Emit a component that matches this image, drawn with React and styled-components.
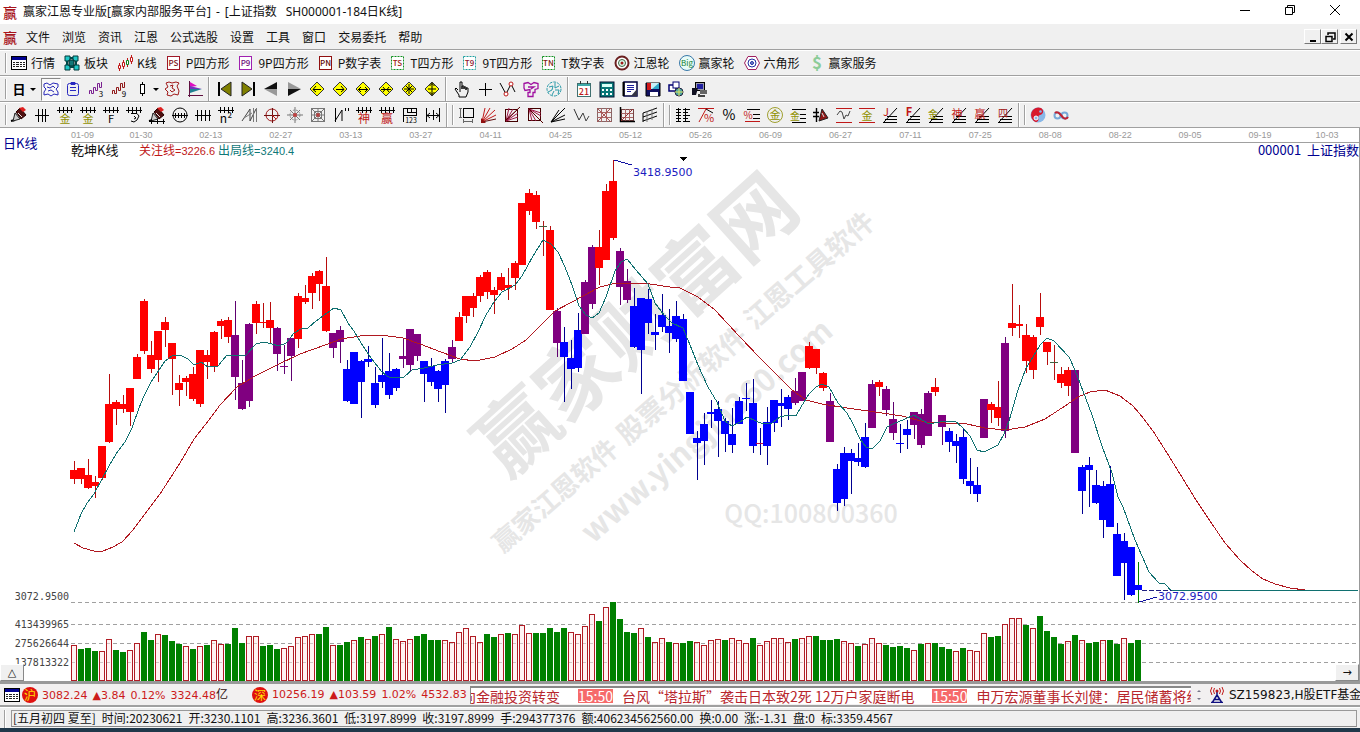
import React from "react";
import styled, { createGlobalStyle, css } from "styled-components";

const UI = '"Noto Sans CJK SC", "Noto Sans", sans-serif';
const WIDE = '"DejaVu Sans", "Noto Sans CJK SC", sans-serif';

const GlobalStyle = createGlobalStyle`
  * { box-sizing: border-box; }
  body { margin: 0; background: #fff; font: 12px/16px ${UI}; color: #111; }
  button { font: inherit; color: inherit; margin: 0; padding: 0; border: 0; background: none; }
`;

const Page = styled.div`
  display: flex;
  flex-direction: column;
  width: 100%;
  overflow: hidden;
`;

/* ---------- title bar and menu ---------- */
const TitleBar = styled.header`
  display: flex;
  align-items: center;
  height: 24px;
  padding-left: 3px;
  background: #fff;
`;
const Logo = styled.span`
  width: 15px;
  margin-right: 5px;
  font-size: 14px;
  font-weight: 500;
  color: #a8141c;
`;
const Title = styled.h1`
  display: flex;
  flex: 1;
  gap: 5px;
  margin: 0;
  font: 400 12px/16px "Noto Sans", "Noto Sans CJK SC", sans-serif;
  white-space: nowrap;
`;
const Symbols = styled.span`
  display: flex;
  gap: 9px;
`;
const WindowButton = styled.button`
  display: flex;
  align-items: center;
  justify-content: center;
  width: 45px;
  height: 22px;
`;
const WindowButtons = styled.div`
  display: flex;
  padding: 0 3px 4px 0;
`;
const MenuBar = styled.nav`
  display: flex;
  align-items: center;
  height: 26px;
  padding: 0 3px;
  background: #f0f0f0;
  border-bottom: 1px solid #a0a0a0;
`;
const MenuItem = styled.button`
  margin: 0 6px;
  white-space: nowrap;
`;
const MenuItems = styled.div`
  display: flex;
  flex: 1;
  margin-left: -3px;
`;
const MdiButton = styled.button`
  display: flex;
  align-items: center;
  justify-content: center;
  width: 17px;
  height: 15px;
  margin-left: ${(p) => (p.$apart ? 2 : 0)}px;
  background: #f0f0f0;
  border: 1px solid;
  border-color: #fff #777 #777 #fff;
`;

/* ---------- toolbars ---------- */
const Toolbar = styled.div`
  display: flex;
  align-items: center;
  height: 26px;
  padding-left: 5px;
  background: #f0f0f0;
  border-top: 1px solid #fff;
  border-bottom: 1px solid #a0a0a0;
`;
const Grip = styled.span`
  flex: none;
  width: 2px;
  height: 20px;
  margin-left: ${(p) => (p.$inner ? 1 : 0)}px;
  border-left: 1px solid #a0a0a0;
  border-right: 1px solid #fff;
`;
const Divider = styled.span`
  align-self: stretch;
  width: 2px;
  margin: 0 3px 0 2px;
  border-left: 1px solid #a0a0a0;
  border-right: 1px solid #fff;
`;
const LabelButton = styled.button`
  display: flex;
  align-items: center;
  gap: 4px;
  margin-right: 9px;
  white-space: nowrap;
`;
const LabelButtons = styled.div`
  display: flex;
  padding-left: 4px;
`;
const ToolButton = styled.button`
  display: flex;
  align-items: center;
  justify-content: center;
  flex: none;
  width: ${(p) => (p.$pressed ? 20 : 23)}px;
  height: 23px;
  ${(p) =>
    p.$pressed &&
    css`
      border: 1px solid;
      border-color: #888 #fff #fff #888;
      background: #f8f8f8;
      margin-left: 4px;
    `}
`;
const DropArrow = styled.span`
  width: 5px;
  margin-right: 1px;
  border: solid transparent;
  border-width: 3px 3px 0;
  border-top-color: #000;
`;
const Glyph = styled.svg`
  display: block;
  flex: none;
  width: 16px;
  height: 16px;
  overflow: visible;
`;

/* ---------- chart ---------- */
const ChartArea = styled.main`
  position: relative;
  background: #fff;
`;
const ChartHead = styled.div`
  display: grid;
  grid-template-columns: 71px 1fr;
  grid-template-rows: 15px 14px;
  border-right: 1px solid #999;
`;
const Period = styled.div`
  grid-row: 1 / 3;
  align-self: center;
  padding-left: 3px;
  font-size: 13px;
  color: #000090;
`;
const Dates = styled.div`
  display: grid;
  grid-template-columns: 35fr repeat(17, 70fr) 64fr;
  border-bottom: 1px solid #a0a0a0;
  font: 9px/15px "Liberation Sans", sans-serif;
  color: #999;
  text-align: center;
  white-space: nowrap;
`;
const DateCell = styled.span`
  text-align: ${(p) => (p.$first ? "left" : "center")};
`;
const Legend = styled.div`
  display: flex;
  align-items: center;
  line-height: 14px;
  white-space: nowrap;
`;
const LegendName = styled.span`
  width: 68px;
  font-size: 13px;
`;
const LegendItem = styled.span`
  margin-right: 3px;
  color: ${(p) => p.$color};
`;
const LegendValue = styled.span`
  font: 11px/14px "Liberation Sans", sans-serif;
`;
const Symbol = styled.span`
  margin-left: auto;
  font-size: 13px;
  color: #000090;
`;
const Plot = styled.svg`
  display: block;
  width: 100%;
  height: auto;
`;
const CornerButton = styled.button`
  position: absolute;
  bottom: 0;
  ${(p) => (p.$right ? "right: 1px;" : "left: 0;")}
  width: 24px;
  height: 17px;
  font: 11px/13px "DejaVu Sans", sans-serif;
  background: #f0f0f0;
  border: 1px solid;
  border-color: #fff #888 #888 #fff;
`;

/* ---------- ticker and status ---------- */
const Ticker = styled.section`
  display: flex;
  align-items: center;
  height: 26px;
  background: #f2f0f0;
  border-top: 3px solid #999;
  border-bottom: 2px solid #a0a0a0;
  white-space: nowrap;
`;
const Indices = styled.div`
  display: flex;
  align-items: center;
  flex: 0 0 470px;
  padding-left: 4px;
  overflow: hidden;
`;
const Market = styled.span`
  flex: none;
  width: 16px;
  height: 16px;
  margin: 0 4px 0 ${(p) => p.$gap}px;
  border-radius: 50%;
  background: #e01010;
  color: #ffe000;
  text-align: center;
`;
const Quote = styled.span`
  display: flex;
  align-items: baseline;
  gap: 5px;
  font: 11px/16px ${WIDE};
  color: #cc1a1a;
`;
const Unit = styled.span`
  font: 12px/16px ${UI};
  color: #301010;
`;
const News = styled.div`
  flex: 1;
  height: 18px;
  min-width: 0;
  overflow: hidden;
  background: #fff;
  border-top: 2px solid #888;
  border-left: 1px solid #888;
`;
const NewsTrack = styled.div`
  display: flex;
  margin-left: -9px;
  font-size: 14px;
  line-height: 16px;
  color: #b8262c;
`;
const NewsTime = styled.time`
  height: 14px;
  margin: 1px 9px 0 18px;
  line-height: 14px;
  background: #f66a6a;
  color: #fff;
`;
const Spinner = styled.span`
  flex: none;
  width: 18px;
`;
const Feed = styled.div`
  display: flex;
  align-items: center;
  gap: 4px;
  flex: 0 0 151px;
  overflow: hidden;
  font: 12px/16px ${WIDE};
`;
const StatusBar = styled.footer`
  display: flex;
  height: 21px;
  padding: 2px 3px 1px 4px;
  gap: 5px;
  background: #f0f0f0;
  border-top: 1px solid #fff;
`;
const StatusText = styled.div`
  display: flex;
  gap: 6px;
  flex: 1;
  overflow: hidden;
  line-height: 14px;
  padding-left: 1px;
  white-space: nowrap;
  border: 1px solid;
  border-color: #999 #999 #888 #999;
`;
const Desktop = styled.div`
  height: 4px;
  background: #20384a;
`;

/* ---------- icon drawing helpers ---------- */
const L = ({ d, c = "#000", w = 1 }) => (
  <path d={d} fill="none" stroke={c} strokeWidth={w} />
);
const F = ({ d, c = "#000", s }) => <path d={d} fill={c} stroke={s} />;
const T = ({ x = 8, y = 15, s = 11, c = "#000", children, w = 400 }) => (
  <text x={x} y={y} fontSize={s} fill={c} textAnchor="middle" fontFamily={UI} fontWeight={w}>
    {children}
  </text>
);
const Icon = ({ children }) => (
  <Glyph viewBox="0 0 16 16" aria-hidden="true">
    {children}
  </Glyph>
);

const Diamond = ({ d }) => (
  <>
    <F d="M8 1L15 8L8 15L1 8Z" c="#ffff00" s="#333" />
    <L d={d} />
  </>
);
const Comb = () => <L d="M0 3.500H16M2.500 0V6M6.500 0V6M10.500 0V6M14.500 0V6" />;
const Fan = () => <L d="M1 15.500H15M3 12.500H15M5 9.500H15M2 15L15 1" />;
const Boxed = ({ c, t, ink }) => (
  <>
    <rect x="1.5" y="1.5" width="12" height="13" fill="#fff" stroke={c} strokeDasharray={t[0] === "T" ? "2 1" : "none"} />
    <T x={7.5} y={11} s={8} c={ink} w={500}>{t}</T>
  </>
);
const Pencil = () => (
  <>
    <L d="M0 14L4 13" w={2} />
    <F d="M2 14L4 6L9 12Z" c="#ccc" s="#222" />
    <F d="M5 5L9 1L15 8L10 12Z" c="#501010" s="#200" />
    <F d="M8 1L12 0L15 3L12 5Z" c="#e02020" />
    <L d="M7 6L11 10" c="#e8e8e8" />
  </>
);

const ART = {
  table: <><rect x="0.5" y="1.5" width="15" height="13" fill="#fff" stroke="#000" /><F d="M1 2H15V5H1Z" c="#000090" /><L d="M2 7.500H14M2 9.500H14M2 11.500H14" c="#222" w={1} /><L d="M4.500 5V14M8.500 5V14M11.500 5V14" c="#fff" /></>,
  blocks: <><F d="M1 1H6V6H1ZM9 1H14V6H9ZM1 10H6V15H1ZM10 10H15V15H10Z" c="#20c8c8" s="#003838" /><F d="M5 5H10V11H5Z" c="#107878" s="#002828" /><L d="M6 3H9M3 6V10M12 6V10M6 12H10" w={2} c="#004848" /></>,
  kline: <><L d="M2.500 8V16M6.500 5V14M10.500 3V12M14.500 0V9" c="#c01818" /><F d="M1.500 10.500H3.500V13.500H1.500ZM5.500 7.500H7.500V11.500H5.500Z" c="#fff" s="#c01818" /><F d="M9.500 5.500H11.500V9.500H9.500Z" c="#fff" s="#108020" /><F d="M13.500 2.500H15.500V6.500H13.500Z" c="#fff" s="#c01818" /></>,
  wheel: <><circle cx="8" cy="8" r="6.5" fill="#fff" stroke="#6b2020" strokeWidth="2" /><circle cx="8" cy="8" r="3.5" fill="#dfe" stroke="#406040" /><circle cx="8" cy="8" r="1.5" fill="#a01818" /></>,
  big: <><circle cx="8" cy="8" r="7.500" fill="#e8fbf8" stroke="#3878a8" /><T y={11} s={8} c="#108030">Big</T></>,
  hex: <><F d="M4 1.5H12L15.5 8L12 14.5H4L0.5 8Z" c="#fff" s="#a02060" /><circle cx="8" cy="8" r="4" fill="none" stroke="#2030a0" /><circle cx="8" cy="8" r="1.500" fill="#7888d0" stroke="#2030a0" /></>,
  dollar: <T y={14} s={17} c="#8ccc98" w={700}>$</T>,
  day: <T y={13} s={13} w={700}>日</T>,
  wave: <><L d="M1 3L4 2L7 4L10 2L15 3V6L13 8L15 11V14L11 13L8 15L5 13L1 14V11L3 8L1 6Z" c="#2828b8" /><L d="M4 6L7 7L10 5L12 7M5 10L8 9L11 11" c="#2828b8" /></>,
  clip: <><rect x="2.5" y="2.5" width="11" height="12" rx="2" fill="none" stroke="#2828c0" /><L d="M5 6.500H11M5 9.500H11M6 1.500H10V3.500H6Z" c="#2828c0" /></>,
  zig3: <><L d="M1.500 13V9.500H3.500V12.500H5.500V6.500H7.500V9.500H9.500V2.500H11.500V6.500H13.500V1" c="#7a2090" /><T x={13} y={16} s={8}>3</T></>,
  zig9: <><L d="M1.500 13V9.500H3.500V12.500H5.500V6.500H7.500V9.500H9.500V2.500H11.500V6.500H13.500V1" c="#901818" /><T x={13} y={16} s={8}>9</T></>,
  candle: <><L d="M8.500 1V4M8.500 12V15" /><rect x="6.500" y="3.500" width="4" height="9" fill="#fff" stroke="#000" /></>,
  gear: <><L d="M2 2L5 1L8 2L12 1L15 2L13 5L15 10L14 14L10 13L7 15L3 14L4 11L1 8L4 6Z" c="#a01818" /><L d="M6 5L9 4L8 7L11 9L8 11L6 9" c="#a01818" /></>,
  flag: <><L d="M2.500 0V16M1 14.500H16" c="#601040" /><F d="M3 1L10 5L3 6Z" c="#e010c0" /><F d="M3 5L15 8L3 8Z" c="#7830c0" /><F d="M3 8H15L3 12Z" c="#208090" /></>,
  first: <><F d="M4 8L14 1V15Z" c="#808000" s="#222" /><L d="M2 1V15" w={2} /></>,
  last: <><F d="M12 8L2 1V15Z" c="#808000" s="#222" /><L d="M14 1V15" w={2} /></>,
  prev: <><F d="M1 8L14 1V8Z" c="#111" /><F d="M1 8L14 8V15Z" c="#999" /></>,
  next: <><F d="M15 8L2 1V8Z" c="#999" /><F d="M15 8L2 8V15Z" c="#111" /></>,
  dL: <Diamond d="M4 8.500H12M7 5L4 8.500L7 11" />,
  dR: <Diamond d="M4 8.500H12M9 5L12 8.500L9 11" />,
  dH: <Diamond d="M3 8.500H13M6 6L3.500 8.500L6 11M10 6L12.500 8.500L10 11" />,
  dC: <Diamond d="M3 8.500H13M5 6L7 8.500L5 11M11 6L9 8.500L11 11" />,
  dX: <Diamond d="M8 3V13M3 8H13M5 5L11 11M11 5L5 11" />,
  dV: <Diamond d="M8 2V14M4 8H12M5.500 5L8 2.500L10.500 5M5.500 11L8 13.500L10.500 11" />,
  hand: <L d="M4 9L2 7L1 8L5 14V16H12L14 11V7H12V9V6H10V8V5H8V8V1H6V11" />,
  plus: <L d="M8.500 2V15M2 8.500H15" />,
  nodes: <><L d="M0 2L6 13L11 3L15 11" /><circle cx="6" cy="13" r="2" fill="#fff" stroke="#c01818" /><circle cx="11" cy="3" r="2" fill="#fff" stroke="#c01818" /></>,
  puzzle: <L d="M1 2.500L5 1.500L8 3.500L11 1.500L15 2.500V7.500L12 8.500V11.500H10V15.500H5V11.500H7V8.500L2 9.500L1 7ZM5 6H11L8 8" c="#a010a0" w={1.300} />,
  brain: <><circle cx="8" cy="8" r="7" fill="none" stroke="#2a9aa8" strokeDasharray="3 1" /><L d="M3 6L7 5L6 9L2 11M9 2V7L13 5M9 9L13 9L12 13M8 10L6 14" c="#2a9aa8" /></>,
  cal: <><rect x="1.500" y="2.500" width="13" height="13" fill="#fff" stroke="#407070" /><F d="M2 3H14V5H2Z" c="#40a8a8" /><L d="M4.500 0V3M11.500 0V3" c="#333" /><T y={14} s={9} c="#c01818" w={500}>21</T></>,
  calc: <><rect x="1" y="1" width="14" height="15" fill="#087878" stroke="#001030" /><F d="M3 3H13V6H3Z" c="#d8fff8" /><F d="M3 8H5V10H3ZM7 8H9V10H7ZM11 8H13V10H11ZM3 12H5V14H3ZM7 12H9V14H7ZM11 12H13V14H11Z" c="#fff" /></>,
  note: <><rect x="2" y="1" width="13" height="14" fill="#fff" stroke="#000040" strokeWidth="1.500" /><L d="M5 4.500H12M5 6.500H12M5 8.500H12M5 10.500H9" c="#2020a0" /><F d="M9 15L15 8V15Z" c="#334" /><L d="M1.500 1V15" w={2} /></>,
  disk: <><F d="M1 2H15V15H1Z" c="#101060" s="#000" /><F d="M2 2H6V9H2Z" c="#d01818" /><F d="M6 2H14V8H6Z" c="#c8f0f8" /><F d="M7 8L14 2V8Z" c="#30a8c8" /><F d="M5 11H13V15H5Z" c="#fff" /></>,
  globe: <><rect x="1" y="4" width="7" height="6" fill="#fff" stroke="#000070" strokeWidth="1.500" /><rect x="5" y="1" width="6" height="6" fill="#fff" stroke="#000070" /><circle cx="11" cy="11" r="4" fill="#50a8a0" stroke="#202040" /><L d="M7 11H15M11 7V15" c="#e0e060" /></>,
  pc: <><rect x="4.500" y="1.500" width="9" height="8" fill="#99a" stroke="#000" /><F d="M6 3H12V8H6Z" c="#2020a0" /><F d="M9 9H16V13H9Z" c="#666" /><F d="M1 7H7L5 14H1Z" c="#112" /><L d="M8 13V15H14" c="#444" w={2} /></>,

  pencil: <Pencil />,
  bars3: <L d="M1 8.500H15M4.500 2V15M8.500 2V15M11.500 2V15" />,
  combGold: <><Comb /><T c="#909000" y={16} s={11}>金</T></>,
  combF: <><Comb /><T y={16} s={11}>F</T></>,
  combS: <><Comb /><L d="M5 6.500H11L13 9L11 13L8 15L5 14M8 9L10 11L8 12" /></>,
  penRule: <><Pencil /><L d="M0 14.500H16M2.500 12V17M8.500 12V17M14.500 12V17" /></>,
  coil: <><circle cx="8" cy="8" r="7" fill="none" stroke="#000" /><L d="M0 8.500H16M3.500 6V11M6.500 6V11M9.500 6V11M12.500 6V11" /></>,
  bars4: <L d="M0 8.500H16M2.500 3V14M6.500 3V14M10.500 3V14M14.500 3V14" />,
  n2: <><Comb /><T y={16} s={12}>n²</T></>,
  angle: <><L d="M1 14L9 2V14L15 2" c="#444" /><L d="M12.500 1V15M15.500 1V15M3 11L11 6" c="#777" /></>,
  cross: <><circle cx="8" cy="8" r="6" fill="none" stroke="#a01818" /><L d="M0 8.500H16M8.500 1V16" c="#701010" /><L d="M8 8L12 12" c="#c01818" /></>,
  star: <><L d="M8 0V16M0 8H16M3 3L13 13M13 3L3 13" c="#777" /><circle cx="8" cy="8" r="5" fill="none" stroke="#888" strokeDasharray="2 1" /><circle cx="8" cy="8" r="2" fill="#c04040" /></>,
  web: <><rect x="1.500" y="1.500" width="13" height="13" fill="none" stroke="#777" /><rect x="4.500" y="4.500" width="7" height="7" fill="none" stroke="#777" /><L d="M1 1L15 15M15 1L1 15M8 1V15M1 8H15" c="#777" /><circle cx="8" cy="8" r="2" fill="#b04040" /></>,
  nQ: <L d="M2.500 1V15M2 14L9 3V14M12.500 1V4M15.500 1V4" />,
  combShen: <><Comb /><T c="#c01818" y={16} s={12}>神</T></>,
  combWin: <><Comb /><T c="#c01818" y={16} s={12}>赢</T></>,
  combNum: <><L d="M1 1.500H15M1 8.500H15M1.500 1V15M5.500 1V5M9.500 1V5M14.500 1V9M5 5.500H15" /><T x={9} y={16} s={7}>123</T></>,
  width: <L d="M1.500 1V15M14.500 1V15M8.500 3V13M2 8.500H14M5 6L2 8.500L5 11M11 6L14 8.500L11 11" />,
  dims: <><rect x="5.500" y="1.500" width="10" height="9" fill="none" stroke="#000" /><L d="M2.500 1V11M1 1.500H4M1 10.500H4M5 14.500H15M5.500 12V16M14.500 12V16" c="#666" /></>,
  rays: <><L d="M1 15L4 1M1 15L9 1M1 15L14 3M1 15L15 8" c="#c01818" /><L d="M1 15L15 12" c="#601010" /><F d="M0 16V11L5 16Z" c="#901010" /></>,
  raysBox: <><rect x="1.500" y="2.500" width="12" height="12" fill="none" stroke="#400" /><L d="M2 14L5 1M2 14L9 2M2 14L14 2M2 14L14 6M2 14L14 10" c="#a01848" /><L d="M1 14L16 0" c="#500" /></>,
  raysBox2: <><rect x="1.500" y="1.500" width="12" height="12" fill="none" stroke="#400" /><L d="M2 2L5 14M2 2L9 14M2 2L14 14M2 2L14 9M2 2L14 6" c="#a01848" /><L d="M1 1L16 16" c="#500" /></>,
  fan: <L d="M1 15L9 3M1 15L15 1M1 15L15 8M1 15L15 12" />,
  vee: <><L d="M1 2L6 13L10 6" c="#333" /><L d="M10 6L13 14L16 9" c="#444" /></>,
  grid: <><rect x="1.500" y="1.500" width="14" height="13" fill="none" stroke="#866" /><L d="M1 5.500H15M1 10.500H15M5.500 1V15M10.500 1V15" c="#a66" /><L d="M1 1L15 15M15 1L1 15" c="#a55" /></>,
  gridArrow: <><rect x="2.500" y="2.500" width="12" height="11" fill="none" stroke="#744" /><L d="M2 6.500H14M2 10.500H14M6.500 2V14M10.500 2V14" c="#a66" /><L d="M1.500 0V14.500H16" w={1.500} /><L d="M2 14L14 2" c="#933" /></>,
  channel: <><L d="M1 15V6M1 6L15 1M1 10L15 5M1 14L15 9" /><L d="M5 15V4M10 13V2" c="#777" /></>,
  ladder: <L d="M3.500 1V15M10.500 1V15M1 2.500H6M1 5.500H6M1 8.500H6M1 11.500H6M1 14.500H6M8 2.500H15M8 5.500H13M8 8.500H15M8 11.500H13M8 14.500H15" />,
  pctTri: <><L d="M0 1.500H16M1 15L8 2" c="#c01818" /><L d="M8 2L15 6" /><T x={11} y={15} s={11} c="#c01818">%</T></>,
  pct: <T y={13} s={14}>%</T>,
  pctLines: <><L d="M3 2.500H16M9 7.500H16M9 11.500H16" /><L d="M1 14.500H16" c="#c01818" /><T x={4} y={12} s={10} c="#c01818">%</T></>,
  goldRing: <><circle cx="8" cy="8" r="7.500" fill="none" stroke="#a0a030" /><T y={12} s={11} c="#909000">金</T></>,
  goldLines: <><L d="M2 2.500H16M10 7.500H16M10 11.500H16M2 15.500H16" /><T x={5} y={13} s={10} c="#909000">金</T></>,
  penBars: <><L d="M3.500 1V15M0 5.500H6M0 9.500H6" w={1.400} /><F d="M6 14L9 2L15 11Z" c="#901818" s="#222" /><L d="M9 6L11 10" c="#ddd" /></>,
  waveLines: <><L d="M0 1.500H16M0 15.500H16" c="#c01818" /><L d="M1 8L4 4L6 5L8 12L10 8L12 9L14 4" c="#444" /></>,
  goldBand: <><L d="M0 1.500H16M0 15.500H16" c="#c01818" /><T y={13} s={11} c="#909000">金</T></>,
  fJ: <><Fan /><T x={4} y={9} s={11} c="#c01818">J</T></>,
  fF: <><Fan /><T x={4} y={9} s={11} c="#c01818" w={700}>F</T></>,
  fG: <><Fan /><T x={5} y={11} s={10} c="#909000">金</T></>,
  fS: <><Fan /><T x={6} y={11} s={11} c="#c01818">神</T></>,
  fW: <><Fan /><T x={6} y={11} s={11} c="#c01818">赢</T></>,
  f4: <><Fan /><T x={6} y={10} s={10} c="#a01818">四</T></>,
  taiji: <><circle cx="8" cy="8" r="7.500" fill="#88b8e8" /><F d="M11 1A7.500 7.500 0 1 0 6 15.200C11 14 6 9 10 8C14 7 14 3 11 1Z" c="#d8182c" /><circle cx="10.500" cy="4.500" r="1.300" fill="#88b8e8" /><circle cx="6" cy="11" r="2" fill="#88b8e8" stroke="#fff" /></>,
  infinity: <><circle cx="4.500" cy="8.500" r="3" fill="none" stroke="#78a8d8" strokeWidth="2" /><circle cx="11.500" cy="8.500" r="3" fill="none" stroke="#78a8d8" strokeWidth="2" /><L d="M2 6Q4 4 7 7L10 10.500Q13 13 15 10" c="#c02030" w={2} /></>,
  antenna: <><L d="M8 5V9M8 8L3 16M8 8L13 16M5 12.500H11M2 15.500H14" c="#101080" w={1.500} /><L d="M3 0Q0 4 3 8M13 0Q16 4 13 8M5.500 1Q3.500 4 5.500 7M10.500 1Q12.500 4 10.500 7" c="#c01818" /><circle cx="8" cy="4" r="1.500" fill="#c01818" /></>,
};

const MENUS = ["文件", "浏览", "资讯", "江恩", "公式选股", "设置", "工具", "窗口", "交易委托", "帮助"];
const VIEWS = [
  ["行情", ART.table], ["板块", ART.blocks], ["K线", ART.kline],
  ["P四方形", <Boxed c="#a01828" ink="#801020" t="PS" />], ["9P四方形", <Boxed c="#a020b0" ink="#701080" t="P9" />],
  ["P数字表", <Boxed c="#901010" ink="#600808" t="PN" />], ["T四方形", <Boxed c="#109020" ink="#a02010" t="TS" />],
  ["9T四方形", <Boxed c="#20a0a0" ink="#901830" t="T9" />], ["T数字表", <Boxed c="#109020" ink="#802010" t="TN" />],
  ["江恩轮", ART.wheel], ["赢家轮", ART.big], ["六角形", ART.hex], ["赢家服务", ART.dollar],
];
/* "|" is a divider, "||" a divider with a new grip, "v" a drop-down arrow */
const MAIN_TOOLS = "day v *wave clip zig3 zig9 candle v gear flag | first last prev next dL dR dH dC dX dV | hand plus nodes puzzle brain | cal calc note disk globe pc".split(" ");
const DRAW_TOOLS = "pencil bars3 combGold combGold combF combS penRule coil bars4 n2 angle cross star web nQ combShen combWin combNum width || dims rays raysBox raysBox2 fan vee grid gridArrow channel || ladder pctTri pct pctLines goldRing goldLines penBars waveLines goldBand fJ fF fG fS fW f4 || taiji infinity".split(" ");

const Tools = ({ list }) =>
  list.map((t, i) => {
    if (t === "|") return <Divider key={i} />;
    if (t === "||") return <React.Fragment key={i}><Divider /><Grip $inner /></React.Fragment>;
    if (t === "v") return <DropArrow key={i} />;
    const pressed = t[0] === "*";
    const name = pressed ? t.slice(1) : t;
    return (
      <ToolButton key={i} type="button" $pressed={pressed} aria-label={name}>
        <Icon>{ART[name]}</Icon>
      </ToolButton>
    );
  });

/* ---------- chart data: colour, high, body top, body bottom, low ---------- */
const CANDLES = `R461,470,479,484 R468,468,479,484 R459,475,488,489 R476,482,486,498 R446,446,478,480 R374,404,442,443 R400,402,409,425 R395,404,409,413 R388,388,412,426 R354,357,379,379
R299,301,351,354 R341,355,369,373 R331,331,360,382 R317,322,330,347 R343,343,359,395 R375,383,390,406 R376,378,382,396 R367,374,399,401 R350,350,404,407 R350,355,362,379
R331,332,367,372 R319,321,326,339 R317,320,337,343 P301,335,377,400 P360,383,409,410 P323,324,401,407 R301,304,323,334 R303,322,323,328 R302,320,328,343 P327,328,354,371
P345,366,367,374 P338,338,356,381 R293,296,339,348 R285,298,302,304 R273,276,293,309 R270,271,284,301 R257,286,331,332 P333,333,348,358 P326,330,342,363 B360,369,401,402
B352,352,404,404 B360,361,382,418 B346,359,362,367 B367,383,405,408 B338,375,382,388 B353,371,395,399 B368,369,388,391 P338,356,359,368 P329,329,365,371 P334,334,356,361
B361,361,374,402 B358,366,382,386 B370,371,389,402 B359,361,385,413 P340,347,359,362 R312,317,341,341 R296,296,316,323 R293,296,308,317 R275,277,296,302 R270,272,292,299
R287,290,295,314 R273,277,290,291 R268,285,288,300 R261,263,278,290 R203,203,265,265 R189,193,211,215 R191,195,222,229 G221,226,227,256 R226,230,310,310 P308,311,343,357
B327,342,357,402 B340,358,369,389 B313,330,368,372 P280,282,334,334 P245,247,304,309 R230,247,268,285 R184,191,260,260 R160,181,238,240 P248,251,287,305 P269,281,300,303
B288,306,347,348 B298,298,350,394 B289,299,323,334 B314,332,335,350 B294,315,327,332 B309,326,333,353 B301,316,339,342 B314,319,381,381 B392,392,434,434 B431,438,443,480
B413,424,441,465 B400,412,414,428 B401,409,421,457 B418,421,434,452 B408,434,445,453 B397,401,424,424 B383,398,399,411 B379,403,446,453 M428,443,444,455 B407,422,446,465
B400,400,423,432 B389,403,406,427 B395,397,409,420 P378,391,403,405 P372,372,401,401 R342,346,368,369 R349,349,368,374 R372,373,388,391 P393,401,442,442 B464,469,503,511
B447,453,499,506 B449,453,461,494 B443,458,462,466 B423,437,467,468 P380,384,428,428 R380,382,387,396 P386,389,410,416 P402,419,433,440 B424,443,444,453 B420,429,435,449
P412,412,425,439 P409,414,445,448 P391,393,436,436 R378,387,392,396 P415,415,427,445 B428,431,442,452 B434,441,446,463 B428,437,479,484 B458,481,486,494 B467,485,494,502
P399,399,438,438 R402,404,410,423 R381,407,418,426 P337,343,431,438 R284,323,328,336 R305,324,326,338 R324,335,361,373 R335,337,370,379 R293,317,327,335 R342,342,352,365
G345,362,363,380 R367,374,383,388 R367,370,386,396 P370,370,453,453 B465,467,491,514 B457,465,470,507 B470,485,503,504 B481,486,520,538 B466,484,527,527 B523,534,576,576
B533,541,563,600 B547,547,595,596 T562,585,590,603`
  .split(/\s+/)
  .map((s) => [s[0], ...s.slice(1).split(",").map(Number)]);

const BODY = { R: "#ff0000", P: "#800080", B: "#0000ff", G: "#406040", M: "#c01040", T: "#0000ff" };
const WICK = { R: "#b80c0c", P: "#600070", B: "#000090", G: "#b01818", M: "#000090", T: "#008000" };

/* volume bars: r is a hollow rising bar, g a solid falling bar, then the top */
const VOLUMES = `r645 g649 g648 g651 r651 r639 g650 g652 r650 r643 g632 g640 r634 g635 g641 g644 r646 g649 r646 g645 r640 r644 g644 g628 g643 r636 r636 g646 g645 g649
r648 r646 r637 r636 r634 g634 g627 r645 g645 g642 r640 g637 r639 g636 r634 g627 r639 r641 r639 g636 g634 g640 g640 r640 r642 r632 r628 r636 r642 g634
g637 r634 g633 r634 r625 r633 g633 g633 g628 g632 g628 r632 r634 r626 r614 g621 r607 g602 g619 g632 g633 r628 g637 r642 r638 g642 r643 g643 g641 r642
r645 r640 r639 g640 r638 r640 r643 g638 r645 r641 r638 r638 r642 g639 r638 r636 g636 g640 g640 g639 r641 r643 g646 r644 r638 r643 g645 g647 g646 g648
r650 g644 r643 g643 g647 g649 r651 g648 r650 r651 r633 g637 g636 r624 r618 r618 g625 r628 g616 g631 g637 g644 r641 g635 r640 g643 g642 r640 g640 g644
r638 g643 g640`
  .split(/\s+/)
  .map((s) => [s[0], Number(s.slice(1))]);

const EXIT_LINE = "74,532 81,514 87,503 94,494 102,479 109,466 116,454 125,442 132,428 139,408 144,396 151,382 159,370 165,361 172,356 180,355 188,359 194,365 201,362 208,367 218,366 227,355 237,355 246,355 256,344 264,342 272,344 279,346 286,343 294,333 301,329 308,328 316,321 327,313 334,308 341,310 348,323 354,331 361,343 371,358 382,372 390,378 404,377 412,370 424,368 437,365 452,363 460,360 470,347 478,332 486,315 494,302 502,292 515,285 522,276 533,256 543,240 551,244 558,252 565,267 572,285 579,306 586,315 592,318 599,313 606,297 615,271 621,262 627,259 636,270 648,284 655,303 664,315 672,323 683,328 690,345 698,365 708,387 717,402 725,421 732,426 740,422 747,417 756,421 763,424 772,423 780,417 788,415 796,416 801,407 809,394 816,387 822,384 829,387 838,403 847,413 853,424 860,439 866,447 872,449 880,441 887,427 895,423 903,420 914,415 922,420 929,424 940,422 955,421 962,427 970,436 977,450 984,452 998,445 1004,434 1009,421 1018,390 1026,368 1033,357 1040,345 1047,338 1054,341 1069,357 1075,370 1083,391 1092,415 1102,446 1112,473 1118,497 1123,507 1135,540 1149,572 1159,583 1165,584 1171,590.500 1358,590.500";
const WATCH_LINE = "74,543 83,548 94,551 103,551 113,547 122,542 133,530 145,514 160,494 180,463 194,439 209,420 220,405 237,387 255,376 275,366 300,354 328,344 341,339 360,336 381,335 403,338 420,344 441,352 460,359 475,361 495,357 512,349 526,340 540,326 555,311 572,302 583,296 600,287 612,284 630,283 650,284 670,287 680,288 698,297 715,310 740,337 760,358 778,376 792,390 806,400 822,404 847,408 875,412 902,416 925,422 945,423 967,424 985,428 1005,430 1025,427 1045,419 1065,406 1078,397 1090,392 1105,390 1120,396 1132,405 1140,414 1153,431 1167,453 1180,474 1196,500 1210,521 1225,543 1240,560 1252,571 1263,579 1275,584 1290,588 1305,590 1317,590";

const DATES = ["01-09", "01-30", "02-13", "02-27", "03-13", "03-27", "04-11", "04-25", "05-12", "05-26", "06-09", "06-27", "07-11", "07-25", "08-08", "08-22", "09-05", "09-19", "10-03"];
const SCALE = [["3072.9500", 602, 600], ["413439965", 624, 628], ["275626644", 643, 647], ["137813322", 662, 666]];

const STATUS = ["[五月初四 夏至]", "时间:20230621", "开:3230.1101", "高:3236.3601", "低:3197.8999", "收:3197.8999", "手:294377376", "额:406234562560.00", "换:0.00", "涨:-1.31", "盘:0", "标:3359.4567"];

const Mark = ({ x, y, a, s, w = 700, children }) => (
  <text transform={`translate(${x} ${y}) rotate(${a})`} fontSize={s} fontWeight={w} fill="#e6e6e6" textAnchor="middle" dominantBaseline="central" fontFamily={UI}>
    {children}
  </text>
);

const Chart = () => (
  <Plot viewBox="0 157 1360 524" role="img" aria-label="上证指数日K线图">
    <g>
      <Mark x={632} y={320} a={-42} s={80} w={700}>赢家财富网</Mark>
      <Mark x={554} y={494} a={-41} s={26}>赢家江恩软件</Mark>
      <Mark x={681} y={384} a={-41} s={27}>股票分析软件</Mark>
      <Mark x={808} y={269} a={-41} s={27}>江恩工具软件</Mark>
      <Mark x={705} y={429} a={-41} s={31}>www.yingjia360.com</Mark>
      <Mark x={811} y={512} a={0} s={25} w={500}>QQ:100800360</Mark>
    </g>
    <g shapeRendering="crispEdges">
      {SCALE.map(([t, y]) => (
        <path key={t} d={`M71 ${y}.5H1358`} stroke="#a0a0a0" strokeDasharray="4 3" />
      ))}
      {VOLUMES.map(([k, y], i) =>
        k === "g" ? (
          <rect key={i} x={71 + 7 * i} y={y} width="6" height={681 - y} fill="#008000" />
        ) : (
          <rect key={i} x={71.5 + 7 * i} y={y + 0.5} width="5" height={680 - y} fill="#ffe8e8" fillOpacity="0.5" stroke="#b01c24" />
        )
      )}
      {CANDLES.map(([k, h, t, b, l], i) => (
        <g key={i}>
          <rect x={74 + 7 * i} y={h} width="1" height={l - h} fill={WICK[k]} />
          <rect x={70 + 7 * i} y={t} width="8" height={b - t} fill={BODY[k]} />
        </g>
      ))}
      <polyline points={WATCH_LINE} fill="none" stroke="#b01820" />
      <polyline points={EXIT_LINE} fill="none" stroke="#107070" />
      <path d="M1142 590.5H1172" stroke="#202080" strokeDasharray="5 2" />
      <path d="M614 160L632 165M1139 602L1157 597" stroke="#1010a0" fill="none" />
      <path d="M680 157H687L683.500 161Z" fill="#000" />
      <path d="M1359.500 157V681" stroke="#999" />
    </g>
    <g fontFamily={WIDE} fontSize="11" fill="#1c1cc0">
      <text x="633" y="176">3418.9500</text>
      <text x="1158" y="600">3072.9500</text>
    </g>
    <g fontFamily='"DejaVu Sans Mono", monospace' fontSize="10" fill="#444" textAnchor="end">
      {SCALE.map(([t, , y]) => (
        <text key={t} x="69" y={y}>{t}</text>
      ))}
    </g>
  </Plot>
);

export default function App() {
  return (
    <Page lang="zh-CN">
      <GlobalStyle />
      <TitleBar>
        <Logo>赢</Logo>
        <Title>
          <span>赢家江恩专业版[赢家内部服务平台]</span>
          <span>-</span>
          <Symbols><span>[上证指数</span><span>SH000001-184日K线]</span></Symbols>
        </Title>
        <WindowButtons>
          <WindowButton type="button" aria-label="最小化"><Icon><L d="M3 8.5H13" /></Icon></WindowButton>
          <WindowButton type="button" aria-label="还原"><Icon><L d="M3.500 5.500H10.500V12.500H3.500ZM5.500 5V3.500H12.500V10.500H11" /></Icon></WindowButton>
          <WindowButton type="button" aria-label="关闭"><Icon><L d="M3 3L13 13M13 3L3 13" /></Icon></WindowButton>
        </WindowButtons>
      </TitleBar>
      <MenuBar>
        <Logo>赢</Logo>
        <MenuItems>
          {MENUS.map((m) => <MenuItem key={m} type="button">{m}</MenuItem>)}
        </MenuItems>
        <MdiButton type="button" aria-label="最小化子窗口"><Icon><L d="M5 12H11" w={2} /></Icon></MdiButton>
        <MdiButton type="button" aria-label="还原子窗口"><Icon><L d="M4 7.500H10V12.500H4ZM6 6V4H13V10H11" w={1.500} /></Icon></MdiButton>
        <MdiButton type="button" $apart aria-label="关闭子窗口"><Icon><L d="M4.500 4.500L11.500 11.500M11.500 4.500L4.500 11.500" w={2} /></Icon></MdiButton>
      </MenuBar>

      <Toolbar>
        <Grip />
        <LabelButtons>
          {VIEWS.map(([label, art]) => (
            <LabelButton key={label} type="button"><Icon>{art}</Icon>{label}</LabelButton>
          ))}
        </LabelButtons>
      </Toolbar>
      <Toolbar><Grip /><Tools list={MAIN_TOOLS} /></Toolbar>
      <Toolbar><Grip /><Tools list={DRAW_TOOLS} /></Toolbar>

      <ChartArea>
        <ChartHead>
          <Period>日K线</Period>
          <Dates>
            {DATES.map((d, i) => <DateCell key={d} $first={i === 0}>{d}</DateCell>)}
          </Dates>
          <Legend>
            <LegendName>乾坤K线</LegendName>
            <LegendItem $color="#c01818">关注线<LegendValue>=3226.6</LegendValue></LegendItem>
            <LegendItem $color="#107878">出局线<LegendValue>=3240.4</LegendValue></LegendItem>
            <Symbol>000001&nbsp; 上证指数</Symbol>
          </Legend>
        </ChartHead>
        <Chart />
        <CornerButton type="button" aria-label="展开">△</CornerButton>
        <CornerButton type="button" $right aria-label="向右">→</CornerButton>
      </ChartArea>

      <Ticker>
        <Indices>
          <Icon>{ART.table}</Icon>
          <Market $gap={2}>沪</Market>
          <Quote><span>3082.24</span><span>▲3.84</span><span>0.12%</span><span>3324.48<Unit>亿</Unit></span></Quote>
          <Market $gap={24}>深</Market>
          <Quote><span>10256.19</span><span>▲103.59</span><span>1.02%</span><span>4532.83</span></Quote>
        </Indices>
        <News>
          <NewsTrack>
            <span>向金融投资转变</span>
            <NewsTime>15:50</NewsTime>
            <span>台风“塔拉斯”袭击日本致2死 12万户家庭断电</span>
            <NewsTime>15:50</NewsTime>
            <span>申万宏源董事长刘健：居民储蓄将经</span>
          </NewsTrack>
        </News>
        <Spinner><Glyph viewBox="0 0 16 16" aria-hidden="true"><F d="M6 5L8 3L10 5ZM6 11L8 13L10 11Z" c="#778" /></Glyph></Spinner>
        <Feed><Icon>{ART.antenna}</Icon><span>SZ159823,H股ETF基金</span></Feed>
      </Ticker>
      <StatusBar>
        <Grip />
        <StatusText>
          {STATUS.map((s) => <span key={s}>{s}</span>)}
        </StatusText>
      </StatusBar>
      <Desktop />
    </Page>
  );
}
